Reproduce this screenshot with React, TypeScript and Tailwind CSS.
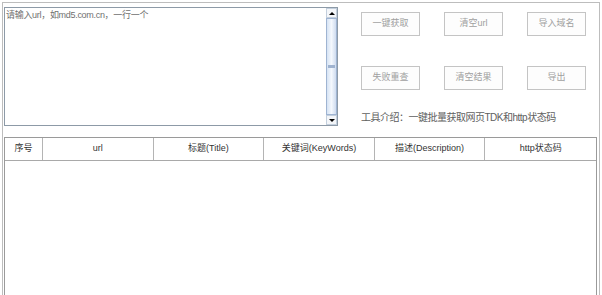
import React from 'react'

const font = { fontFamily: '"Liberation Sans", "Noto Sans CJK SC", sans-serif' }

const buttons = [
  ['一键获取', '清空url', '导入域名'],
  ['失败重查', '清空结果', '导出'],
]

const columns = ['序号', 'url', '标题(Title)', '关键词(KeyWords)', '描述(Description)', 'http状态码']

function ScrollBar() {
  return (
    <div className="flex h-full w-[11px] flex-col bg-[#eef3fa]">
      <div className="flex h-[10px] items-center justify-center border border-[#c3cfdd] bg-[#f4f6f9]">
        <div className="h-0 w-0 border-x-[3px] border-b-[3px] border-x-transparent border-b-black" />
      </div>
      <div className="flex flex-1 items-center justify-center border border-[#9fb4d2] bg-gradient-to-r from-[#d6e3f4] via-[#f4f8fd] to-[#cfdcef]">
        <div className="h-[3px] w-[7px] bg-[#9fb3d0]" />
      </div>
      <div className="flex h-[10px] items-center justify-center border border-[#c3cfdd] bg-[#f4f6f9]">
        <div className="h-0 w-0 border-x-[3px] border-t-[3px] border-x-transparent border-t-black" />
      </div>
    </div>
  )
}

export default function App() {
  return (
    <div className="h-[295px] w-[602px] overflow-hidden bg-white" style={font}>
      <div className="ml-[2px] mt-[2px] h-[293px] w-[598px] border-l border-r border-t border-[#bdbdbd]">
        <div className="flex pl-[1px] pt-[4px]">
          {/* url input */}
          <div className="flex h-[119px] w-[334px] border border-[#8d9aa7] bg-white">
            <div className="flex-1 pl-[1px] pt-[2px] text-[9px] leading-[11px] tracking-[-0.3px] text-[#707070]">
              请输入url，如md5.com.cn，一行一个
            </div>
            <ScrollBar />
          </div>

          <div className="ml-[23px] flex flex-col pt-[5px]">
            <div className="grid grid-cols-[59px_59px_59px] gap-x-[24px] gap-y-[30px]">
              {buttons.flat().map((b) => (
                <button
                  key={b}
                  className="flex h-[24px] items-center justify-center border border-[#c4c4c4] bg-[#fdfdfd] text-[9px] text-[#a0a0a0]"
                >
                  {b}
                </button>
              ))}
            </div>
            <div className="mt-[22px] text-[10px] leading-[12px] tracking-[-0.5px] text-[#606060]">
              工具介绍：一键批量获取网页TDK和http状态码
            </div>
          </div>
        </div>

        {/* result table */}
        <div className="ml-[1px] mt-[11px] h-[200px] w-[593px] border-l border-r border-t border-[#9a9a9a]">
          <div className="grid h-[23px] grid-cols-[38px_repeat(5,1fr)] border-b border-[#a9a9a9]">
            {columns.map((c, i) => (
              <div
                key={c}
                className={
                  'flex items-center justify-center text-[9px] text-[#333] ' +
                  (i < columns.length - 1 ? 'border-r border-[#b4b4b4]' : '')
                }
              >
                {c}
              </div>
            ))}
          </div>
        </div>
      </div>
    </div>
  )
}
